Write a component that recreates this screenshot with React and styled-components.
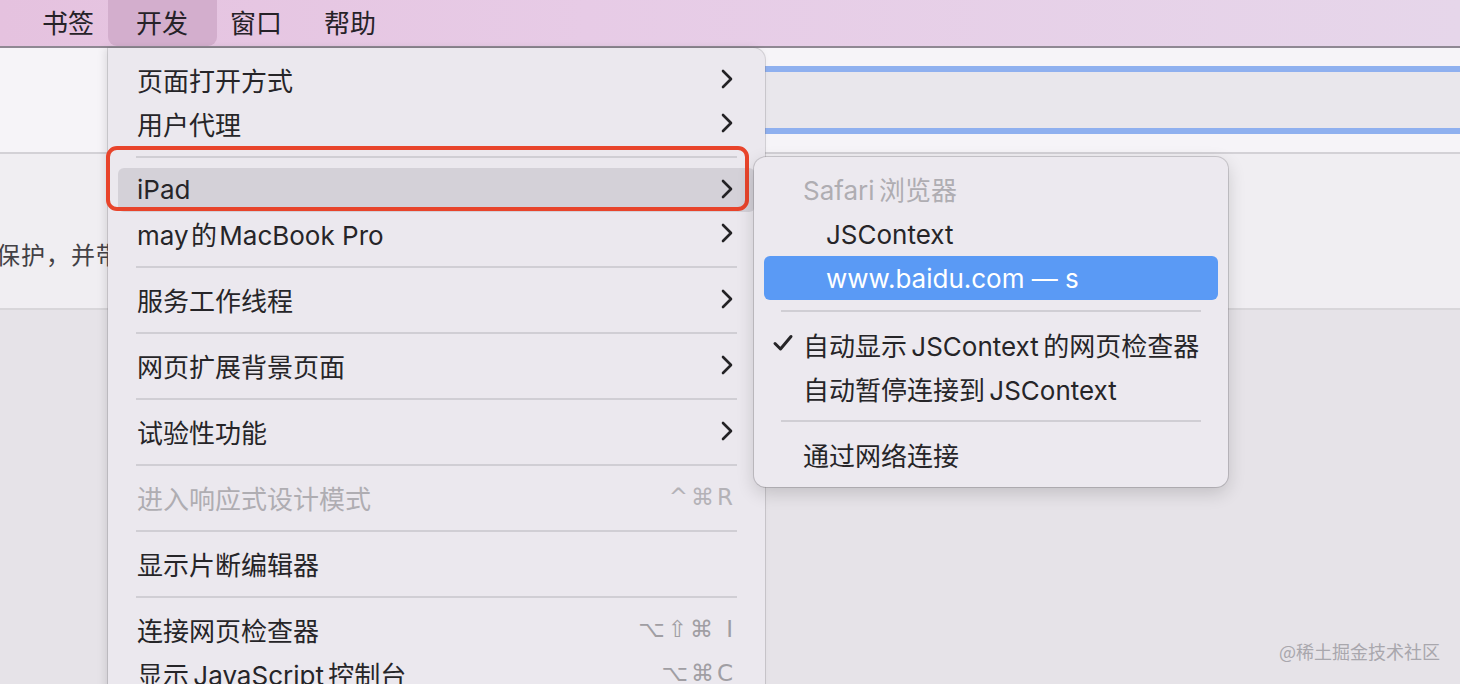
import React from "react";
import styled, { createGlobalStyle } from "styled-components";

const GlobalStyle = createGlobalStyle`
  html, body {
    margin: 0;
    padding: 0;
    background: #e6e3e8;
  }
  body {
    font-family: Inter, "Noto Sans CJK SC", sans-serif;
  }
`;

const Screen = styled.div`
  position: relative;
  width: 1460px;
  height: 684px;
  overflow: hidden;
  display: flex;
  flex-direction: column;
  background: #e6e3e8;
  color: #262528;
`;

const MenuBar = styled.div`
  height: 46px;
  flex-shrink: 0;
  display: flex;
  align-items: stretch;
  padding-left: 21px;
  background: linear-gradient(90deg, #e5c2df 0%, #e7cbe6 40%, #e6d6ea 100%);
  border-bottom: 2px solid #8f8893;
`;

const BarItem = styled.div`
  position: relative;
  display: flex;
  align-items: center;
  padding: 0 21px 3px;
  font-family: "Noto Sans CJK SC", sans-serif;
  font-size: 26px;
  color: #262228;

  &::before {
    content: "";
    display: ${({ $active }) => ($active ? "block" : "none")};
    position: absolute;
    left: -7px;
    right: -8px;
    top: 0;
    bottom: 0;
    background: #d3aecd;
    border-radius: 0 0 9px 9px;
  }

  span {
    position: relative;
  }
`;

const Toolbar = styled.div`
  height: 104px;
  flex-shrink: 0;
  display: flex;
  flex-direction: column;
  justify-content: center;
  background: #f6f4f8;
  border-bottom: 2px solid #d3d1d6;
`;

const AddressField = styled.div`
  height: 56px;
  margin-left: 765px;
  background: #e9e7ec;
  border-top: 6px solid #8fb0ef;
  border-bottom: 6px solid #8fb0ef;
`;

const Banner = styled.div`
  height: 156px;
  flex-shrink: 0;
  display: flex;
  align-items: flex-start;
  background: #f0eef2;
  border-bottom: 2px solid #d8d6da;
  font-family: "Noto Sans CJK SC", sans-serif;
  font-size: 24px;
  color: #434145;
  white-space: nowrap;
  padding-top: 82px;
  box-sizing: border-box;
`;

const BannerText = styled.div`
  margin-left: -4px;
  letter-spacing: 1px;
`;

const Body = styled.div`
  flex: 1;
  display: flex;
  justify-content: flex-end;
  align-items: flex-end;
  padding: 0 20px 20px 0;
`;

const Watermark = styled.div`
  font-family: "Noto Sans CJK SC", sans-serif;
  font-size: 18px;
  color: #a9a7ad;
`;

const Menu = styled.div`
  position: absolute;
  left: 108px;
  top: 48px;
  width: 657px;
  height: 700px;
  box-sizing: border-box;
  padding: 10px 10px;
  background: #ebe8ee;
  border-radius: 0 12px 0 0;
  box-shadow: -3px 0 8px rgba(0, 0, 0, 0.1), 0 0 0 1px rgba(120, 116, 124, 0.25);
  display: flex;
  flex-direction: column;
`;

const SubMenu = styled.div`
  position: absolute;
  left: 754px;
  top: 157px;
  width: 474px;
  height: 330px;
  box-sizing: border-box;
  padding: 11px 10px 10px;
  background: #ece9ef;
  border-radius: 12px;
  box-shadow: 0 6px 18px rgba(0, 0, 0, 0.16), 0 0 0 1px rgba(120, 116, 124, 0.3);
  display: flex;
  flex-direction: column;
`;

const Row = styled.div`
  position: relative;
  height: 44px;
  flex-shrink: 0;
  box-sizing: border-box;
  display: flex;
  align-items: center;
  padding: 0 21px ${({ $lift }) => $lift ?? 2}px ${({ $indent }) => $indent || 19}px;
  border-radius: 6px;
  font-size: 26px;
  white-space: nowrap;
  background: ${({ $hl }) =>
    $hl === "blue" ? "#5a9af5" : $hl === "gray" ? "#d4d1d8" : "transparent"};
  color: ${({ $hl, $dim }) =>
    $hl === "blue" ? "#ffffff" : $dim ? "#afadb2" : "#262528"};
`;

const Label = styled.span`
  flex: 1;
  font-family: Inter, "Noto Sans CJK SC", sans-serif;
`;

const Shortcut = styled.span`
  font-family: "DejaVu Sans", Inter, sans-serif;
  font-size: 23px;
  color: ${({ $dim }) => ($dim ? "#b4b2b7" : "#a09ea3")};
  letter-spacing: 3px;
  margin-right: -2px;
`;

const Check = styled.svg`
  position: absolute;
  left: 8px;
  top: 12px;
`;

const Separator = styled.div`
  height: 2px;
  flex-shrink: 0;
  margin: 10px ${({ $side }) => $side || "18px"};
  background: #d0ced4;
`;

const Annotation = styled.div`
  position: absolute;
  left: 106px;
  top: 146px;
  width: 643px;
  height: 65px;
  box-sizing: border-box;
  border: 4px solid #e8442b;
  border-radius: 11px;
`;

const Chevron = () => (
  <svg width="14" height="22" viewBox="0 0 14 22">
    <path
      d="M3 3 L11 11 L3 19"
      fill="none"
      stroke="#232225"
      strokeWidth="2.6"
      strokeLinecap="round"
      strokeLinejoin="round"
    />
  </svg>
);

// thin spaces give the small gap macOS puts between Latin and CJK text
const mainItems = [
  { label: "页面打开方式", sub: true },
  { label: "用户代理", sub: true },
  { sep: true },
  { label: "iPad", sub: true, hl: "gray" },
  { label: "may\u200a的\u200aMacBook Pro", sub: true },
  { sep: true },
  { label: "服务工作线程", sub: true },
  { sep: true },
  { label: "网页扩展背景页面", sub: true },
  { sep: true },
  { label: "试验性功能", sub: true },
  { sep: true },
  { label: "进入响应式设计模式", dim: true, key: "^⌘R" },
  { sep: true },
  { label: "显示片断编辑器" },
  { sep: true },
  { label: "连接网页检查器", key: "⌥⇧⌘ I" },
  { label: "显示\u2006JavaScript\u2006控制台", key: "⌥⌘C" },
];

const subItems = [
  { label: "Safari\u2006浏览器", dim: true, indent: 39 },
  { label: "JSContext", indent: 62 },
  { label: "www.baidu.com — s", indent: 62, hl: "blue" },
  { sep: true },
  { label: "自动显示\u2006JSContext\u2006的网页检查器", indent: 39, checked: true },
  { label: "自动暂停连接到\u2006JSContext", indent: 39 },
  { sep: true },
  { label: "通过网络连接", indent: 39 },
];

const App = () => {
  return (
    <>
      <GlobalStyle />
      <Screen>
        <MenuBar>
          <BarItem><span>书签</span></BarItem>
          <BarItem $active><span>开发</span></BarItem>
          <BarItem><span>窗口</span></BarItem>
          <BarItem><span>帮助</span></BarItem>
        </MenuBar>
        <Toolbar>
          <AddressField />
        </Toolbar>
        <Banner>
          <BannerText>保护，并带来更多体验</BannerText>
        </Banner>
        <Body>
          <Watermark>@稀土掘金技术社区</Watermark>
        </Body>

        <Menu>
          {mainItems.map((item, i) =>
            item.sep ? (
              <Separator key={i} />
            ) : (
              <Row key={i} $hl={item.hl} $dim={item.dim}>
                <Label>{item.label}</Label>
                {item.sub && <Chevron />}
                {item.key && <Shortcut $dim={item.dim}>{item.key}</Shortcut>}
              </Row>
            )
          )}
        </Menu>

        <Annotation />

        <SubMenu>
          {subItems.map((item, i) =>
            item.sep ? (
              <Separator key={i} $side="17px" />
            ) : (
              <Row
                key={i}
                $hl={item.hl}
                $dim={item.dim}
                $indent={item.indent}
                $lift={i === 0 ? 3 : 0}
              >
                {item.checked && (
                  <Check width="22" height="18" viewBox="0 0 22 18">
                    <path
                      d="M3 9.5 L8.5 15 L19 2.5"
                      fill="none"
                      stroke="#262528"
                      strokeWidth="3"
                      strokeLinecap="round"
                      strokeLinejoin="round"
                    />
                  </Check>
                )}
                <Label>{item.label}</Label>
              </Row>
            )
          )}
        </SubMenu>
      </Screen>
    </>
  );
};

export default App;
